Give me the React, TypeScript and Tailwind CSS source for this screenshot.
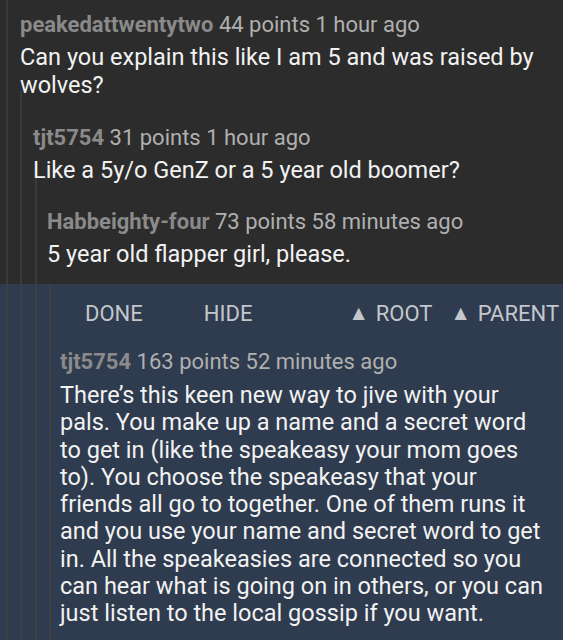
import React from 'react';

const font = { fontFamily: 'Roboto, "Noto Sans", sans-serif' };
const tri = { fontFamily: '"DejaVu Sans", sans-serif' };

function Header({ user, meta }: { user: string; meta: string }) {
  return (
    <div className="text-[22px] leading-[24px] whitespace-nowrap">
      <span className="font-bold text-[#8a8a8a]">{user}</span>{' '}
      <span className="text-[#b0b0b0]">{meta}</span>
    </div>
  );
}

function Body({ children }: { children: React.ReactNode }) {
  return <div className="mt-[6px] text-[23.5px] leading-[28px] text-[#f2f2f2]">{children}</div>;
}

export default function App() {
  return (
    <div className="w-[563px] h-[640px] overflow-hidden bg-[#2c2c2c]" style={font}>
      {/* read comments */}
      <div className="h-[284px] pl-[6px]">
        <div className="h-full border-l-2 border-[#3a3a3a] pl-[12px] pt-[13px]">
          <Header user="peakedattwentytwo" meta="44 points 1 hour ago" />
          <Body>Can you explain this like I am 5 and was raised by wolves?</Body>
          <div className="mt-[-8px] h-[200px] border-l-2 border-[#3a3a3a] pl-[11px] pt-[35px]">
            <Header user="tjt5754" meta="31 points 1 hour ago" />
            <Body>Like a 5y/o GenZ or a 5 year old boomer?</Body>
            <div className="ml-[2px] mt-[-15px] h-[120px] border-l-2 border-[#3a3a3a] pl-[10px] pt-[41px]">
              <Header user="Habbeighty-four" meta="73 points 58 minutes ago" />
              <Body>5 year old flapper girl, please.</Body>
            </div>
          </div>
        </div>
      </div>

      {/* selected comment */}
      <div className="flex h-[356px] bg-[#2f3b4e]">
        <div className="ml-[6px] w-[14px] shrink-0 border-l-2 border-[#3d3f47]" />
        <div className="w-[15px] shrink-0 border-l-2 border-[#3d3f47]" />
        <div className="w-[14px] shrink-0 border-l-2 border-[#3d3f47]" />
        <div className="min-w-0 flex-1 border-l-2 border-[#3d3f47] pl-[9px] pr-[12px]">
          <div className="flex items-center h-[58px] text-[22px] text-[#c3c6cc] whitespace-nowrap">
            <span className="ml-[25px]">DONE</span>
            <span className="ml-[61px]">HIDE</span>
            <span className="ml-[100px] flex items-center gap-[11px]">
              <span className="text-[16px]" style={tri}>▲</span>ROOT
            </span>
            <span className="ml-[22px] flex items-center gap-[11px]">
              <span className="text-[16px]" style={tri}>▲</span>PARENT
            </span>
          </div>
          <div className="pt-[8px]">
            <Header user="tjt5754" meta="163 points 52 minutes ago" />
            <div className="mt-[8px] text-[23.5px] leading-[27.3px] text-[#f2f2f2]">
              There’s this keen new way to jive with your pals. You make up a name and a secret word to get in (like the speakeasy your mom goes to). You choose the speakeasy that your friends all go to together. One of them runs it and you use your name and secret word to get in. All the speakeasies are connected so you can hear what is going on in others, or you can just listen to the local gossip if you want.
            </div>
          </div>
        </div>
      </div>
    </div>
  );
}
